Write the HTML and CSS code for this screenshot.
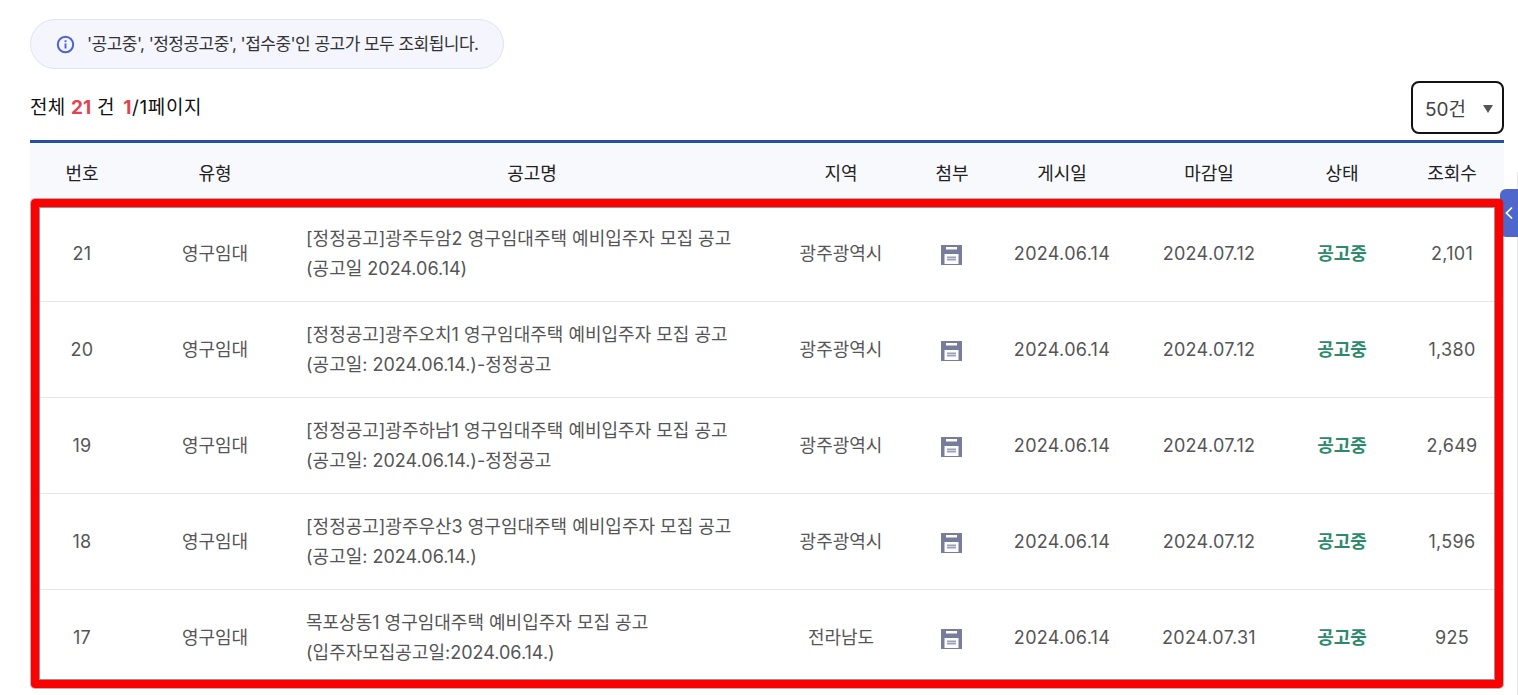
FILE: index.html
```html
<!DOCTYPE html>
<html lang="ko">
<head>
<meta charset="utf-8">
<title>공고 목록</title>
<link rel="stylesheet" href="styles.css">
</head>
<body>
<div class="side-panel"></div>
<button class="side-tab" aria-label="닫기"><svg viewBox="0 0 10 14" width="10" height="14"><path d="M8 1.5 2.5 7 8 12.5" fill="none" stroke="#fff" stroke-width="1.7"/></svg></button>
<main class="page">
  <div class="notice">
    <svg class="info-icon" viewBox="0 0 18 18" width="19" height="19" aria-hidden="true"><circle cx="9" cy="9" r="7.3" fill="none" stroke="currentColor" stroke-width="1.9"/><rect x="8.1" y="8" width="1.8" height="4.8" fill="currentColor"/><rect x="8.1" y="5" width="1.8" height="1.8" fill="currentColor"/></svg>
    <span class="notice-text">'공고중', '정정공고중', '접수중'인 공고가 모두 조회됩니다.</span>
  </div>
  <div class="summary">
    <p class="count">전체 <b>21</b> 건 <span class="page-no"><b>1</b>/1페이지</span></p>
    <div class="select"><span>50건</span><i class="caret"></i></div>
  </div>
  <div class="table-wrap">
    <table class="list">
      <colgroup>
        <col class="c-no"><col class="c-type"><col class="c-title"><col class="c-area"><col class="c-file"><col class="c-date1"><col class="c-date2"><col class="c-state"><col class="c-views">
      </colgroup>
      <thead>
        <tr><th>번호</th><th>유형</th><th>공고명</th><th>지역</th><th>첨부</th><th>게시일</th><th>마감일</th><th>상태</th><th>조회수</th></tr>
      </thead>
      <tbody>
        <tr><td class="num">21</td><td>영구임대</td><td class="title">[정정공고]광주두암2 영구임대주택 예비입주자 모집 공고<br>(공고일 2024.06.14)</td><td>광주광역시</td><td><svg class="file" viewBox="0 0 21 20"><use href="#disk"/></svg></td><td class="num">2024.06.14</td><td class="num">2024.07.12</td><td class="state">공고중</td><td class="num">2,101</td></tr>
        <tr><td class="num">20</td><td>영구임대</td><td class="title">[정정공고]광주오치1 영구임대주택 예비입주자 모집 공고<br>(공고일: 2024.06.14.)-정정공고</td><td>광주광역시</td><td><svg class="file" viewBox="0 0 21 20"><use href="#disk"/></svg></td><td class="num">2024.06.14</td><td class="num">2024.07.12</td><td class="state">공고중</td><td class="num">1,380</td></tr>
        <tr><td class="num">19</td><td>영구임대</td><td class="title">[정정공고]광주하남1 영구임대주택 예비입주자 모집 공고<br>(공고일: 2024.06.14.)-정정공고</td><td>광주광역시</td><td><svg class="file" viewBox="0 0 21 20"><use href="#disk"/></svg></td><td class="num">2024.06.14</td><td class="num">2024.07.12</td><td class="state">공고중</td><td class="num">2,649</td></tr>
        <tr><td class="num">18</td><td>영구임대</td><td class="title">[정정공고]광주우산3 영구임대주택 예비입주자 모집 공고<br>(공고일: 2024.06.14.)</td><td>광주광역시</td><td><svg class="file" viewBox="0 0 21 20"><use href="#disk"/></svg></td><td class="num">2024.06.14</td><td class="num">2024.07.12</td><td class="state">공고중</td><td class="num">1,596</td></tr>
        <tr><td class="num">17</td><td>영구임대</td><td class="title">목포상동1 영구임대주택 예비입주자 모집 공고<br>(입주자모집공고일:2024.06.14.)</td><td>전라남도</td><td><svg class="file" viewBox="0 0 21 20"><use href="#disk"/></svg></td><td class="num">2024.06.14</td><td class="num">2024.07.31</td><td class="state">공고중</td><td class="num">925</td></tr>
      </tbody>
    </table>
    <div class="highlight"></div>
  </div>
</main>
<svg class="defs" width="0" height="0" aria-hidden="true"><defs><g id="disk"><path fill="#767c9b" fill-rule="evenodd" d="M0 0h21v20H0zM5 2v2.5h11V2zM3.5 9v10h14V9z"/><path fill="#9a9fb8" d="M6 11.5h9v4H6z"/><path fill="#e4e6ef" d="M6 13.2h9v.8H6z"/></g></defs></svg>
</body>
</html>
```
FILE: styles.css
```css
* { box-sizing: border-box; }
html, body { margin: 0; height: 695px; overflow: hidden; background: #fff; }
body {
  font-family: Inter, Roboto, "Noto Sans CJK KR", sans-serif;
  font-size: 18px;
  color: #555;
}
.page { padding: 19px 14px 0 30px; }
.notice {
  display: inline-flex;
  align-items: center;
  gap: 12px;
  height: 50px;
  padding: 0 25px 0 25px;
  border: 1px solid #dfe2f3;
  border-radius: 25px;
  background: #f5f6fd;
  color: #333;
  font-size: 17px;
  letter-spacing: -0.53px;
}
.notice-text { padding-bottom: 3px; }
.info-icon { color: #4a63d8; flex: none; }
.summary {
  display: flex;
  justify-content: space-between;
  align-items: center;
  height: 53px;
  margin-top: 12px;
}
.count { margin: 0 0 5px; color: #111; font-size: 19px; letter-spacing: 0.2px; }
.count b { color: #e8414e; font-weight: 700; }
.page-no { margin-left: 3px; letter-spacing: 0.6px; }
.select {
  display: flex;
  align-items: center;
  justify-content: space-between;
  width: 93px;
  height: 53px;
  padding: 0 9px 0 12px;
  border: 2px solid #111;
  border-radius: 8px;
  font-size: 19px;
  color: #444;
}
.caret { width: 0; height: 0; margin-top: 3px; border: 5.5px solid transparent; border-top: 8px solid #555; border-bottom: 0; }
.table-wrap { position: relative; margin-top: 6px; }
.list {
  width: 100%;
  table-layout: fixed;
  border-collapse: collapse;
  border-top: 3px solid #2350a5;
}
.c-no { width: 104px; } .c-type { width: 162px; } .c-title { width: 472px; } .c-area { width: 146px; }
.c-file { width: 76px; } .c-date1 { width: 144px; } .c-date2 { width: 150px; } .c-state { width: 116px; } .c-views { width: 104px; }
th {
  height: 64px;
  padding: 0 0 4px;
  background: #f8f9fc;
  color: #222;
  font-weight: 400;
  font-size: 18px;
  text-align: center;
}
td {
  height: 96px;
  padding: 1px 0 0;
  border-bottom: 1px solid #e6e6e6;
  text-align: center;
  line-height: 30px;
}
td.num { letter-spacing: 0.3px; }
td.title { padding-left: 10px; text-align: left; }
td.state { color: #2c8a6b; font-weight: 700; }
.file { display: block; width: 21px; height: 20px; margin: 2px auto 0; transform: translateX(-1px); }
.highlight {
  position: absolute;
  z-index: 2;
  left: 1px;
  right: 1px;
  top: 59px;
  height: 489px;
  border: 8px solid #f00;
  border-radius: 4px;
  box-shadow: 0 0 0 1px rgba(90, 90, 90, .45), inset 0 0 0 1px rgba(60, 60, 60, .55);
}
.side-panel {
  position: absolute;
  right: 0;
  top: 172px;
  bottom: 0;
  width: 1px;
  background: #e8e8e8;
}
.side-tab {
  position: absolute;
  z-index: 1;
  right: 0;
  top: 189px;
  width: 18px;
  height: 48px;
  padding: 0;
  border: 0;
  border-radius: 6px 0 0 6px;
  background: #4f66cc;
  display: flex;
  align-items: center;
  justify-content: center;
}
.defs { position: absolute; }
```
